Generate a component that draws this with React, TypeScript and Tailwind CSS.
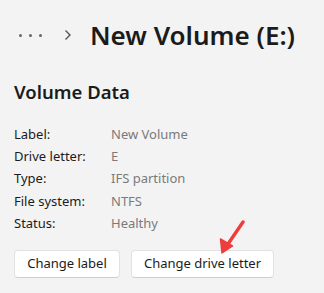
const ROWS: [string, string][] = [
  ["Label:", "New Volume"],
  ["Drive letter:", "E"],
  ["Type:", "IFS partition"],
  ["File system:", "NTFS"],
  ["Status:", "Healthy"],
];

export default function App() {
  return (
    <div
      className="h-[293px] w-[324px] overflow-hidden bg-[#f3f3f3] text-[#1b1b1b]"
      style={{ fontFamily: '"Noto Sans", "Open Sans", sans-serif' }}
    >
      <div className="flex h-[70px] items-center pl-[19px]">
        <span className="flex w-[45px] items-center gap-[7px]">
          <span className="h-[3px] w-[3px] rounded-full bg-[#666]" />
          <span className="h-[3px] w-[3px] rounded-full bg-[#666]" />
          <span className="h-[3px] w-[3px] rounded-full bg-[#666]" />
        </span>
        <svg width="8" height="12" viewBox="0 0 8 12" className="mr-[18px]">
          <path d="M1.5 1.5 L6 6 L1.5 10.5" fill="none" stroke="#555" strokeWidth="1.4" />
        </svg>
        <h1 className="text-[26px] font-semibold leading-none">New Volume (E:)</h1>
      </div>

      <div className="px-[14px]">
        <h2 className="mt-[13px] text-[18.5px] font-semibold leading-none">Volume Data</h2>

        <div className="mt-[22px] flex flex-col">
          {ROWS.map(([k, v]) => (
            <div key={k} className="flex h-[22.25px] items-center text-[13px]">
              <span className="w-[97px]">{k}</span>
              <span className="text-[#7a7a7a]">{v}</span>
            </div>
          ))}
        </div>

        <div className="relative mt-[15px] flex gap-[11px]">
          <button className="h-[28px] w-[106px] rounded-[4px] border border-[#e2e2e2] border-b-[#cfcfcf] bg-white text-[13px]">
            Change label
          </button>
          <button className="h-[28px] w-[143px] rounded-[4px] border border-[#e2e2e2] border-b-[#cfcfcf] bg-white text-[13px]">
            Change drive letter
          </button>
          <svg
            width="32"
            height="40"
            viewBox="0 0 32 40"
            className="absolute left-[202px] top-[-30px]"
          >
            <path d="M27 2 L12 24" stroke="#ee3d3d" strokeWidth="3.4" strokeLinecap="round" />
            <path d="M6 33 L4.5 19 L16.5 26 Z" fill="#ee3d3d" stroke="#ee3d3d" strokeWidth="1.5" strokeLinejoin="round" />
          </svg>
        </div>
      </div>
    </div>
  );
}
